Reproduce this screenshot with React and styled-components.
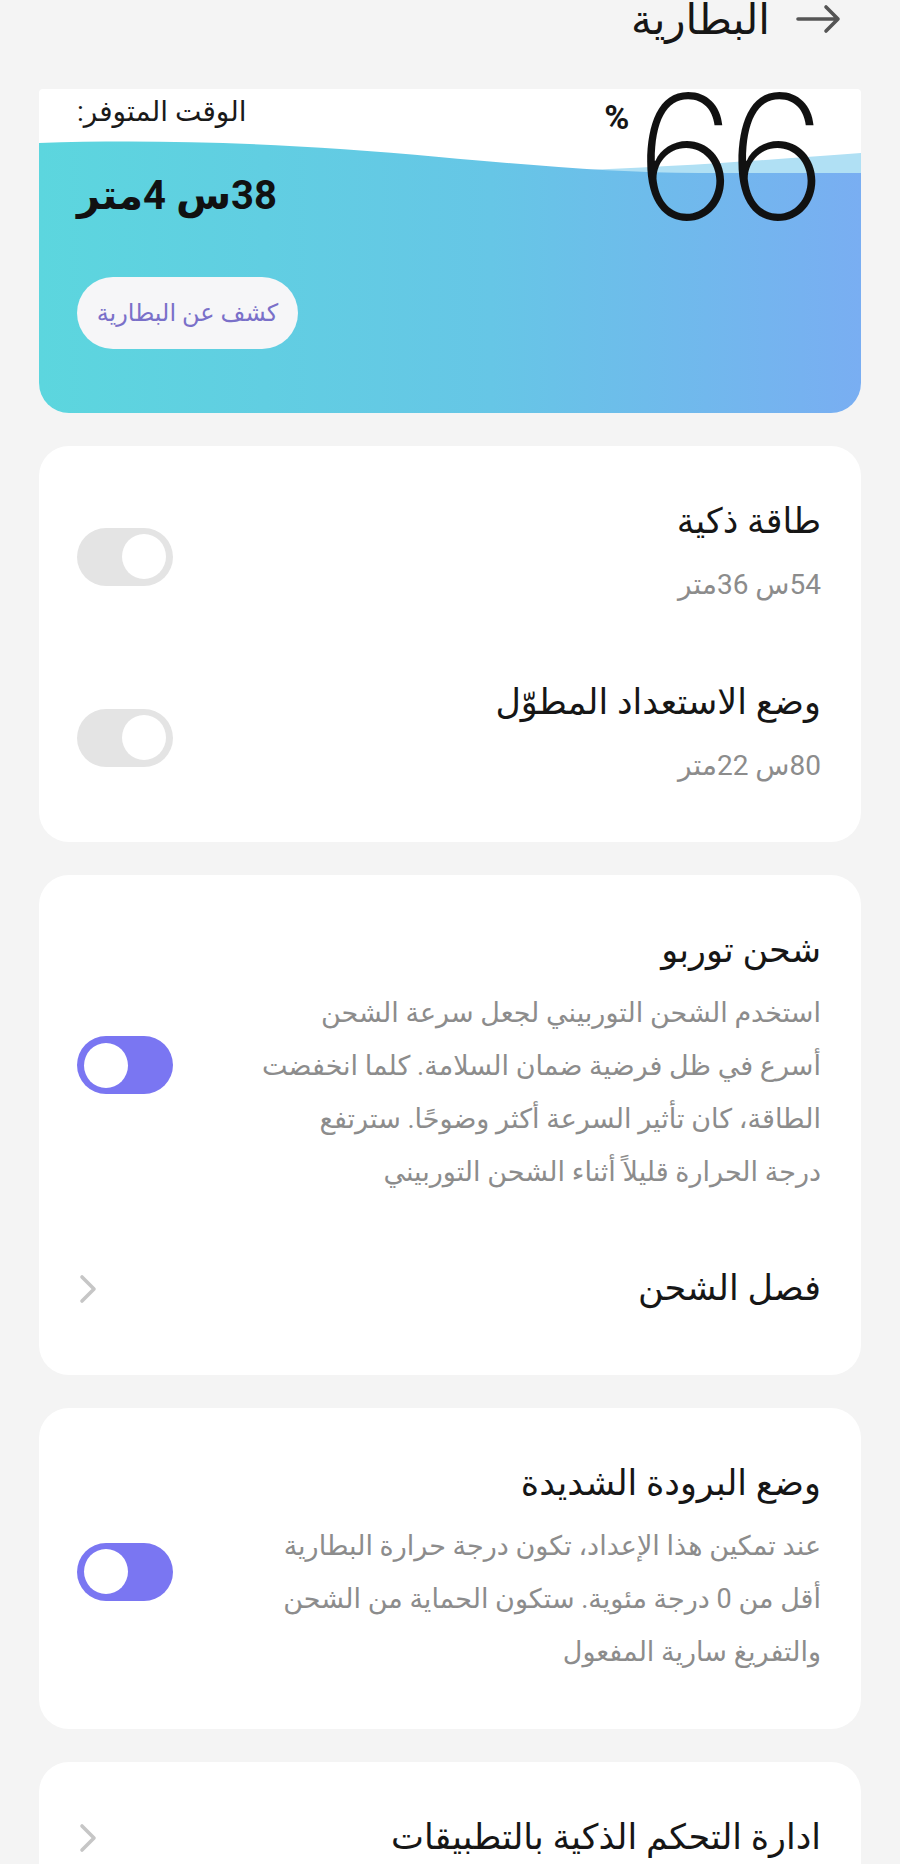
import React from "react";
import styled, { createGlobalStyle } from "styled-components";

const GlobalStyle = createGlobalStyle`
  html, body {
    margin: 0;
    padding: 0;
    background: #f4f4f4;
  }
  body {
    font-family: "Roboto", "DejaVu Sans", sans-serif;
    color: #161616;
  }
`;

const Page = styled.div`
  direction: rtl;
  padding: 0 39px 40px;
  display: flex;
  flex-direction: column;
  gap: 33px;
`;

const Header = styled.header`
  height: 56px;
  display: flex;
  align-items: flex-start;
  gap: 26px;
  padding-right: 19px;
`;

const BackArrow = styled.svg`
  width: 46px;
  height: 30px;
  margin-top: 4px;
  flex-shrink: 0;
`;

const Title = styled.h1`
  margin: 0;
  font-size: 42px;
  font-weight: 500;
  line-height: 40px;
`;

const BatteryCard = styled.section`
  position: relative;
  overflow: hidden;
  height: 324px;
  border-radius: 4px 4px 30px 30px;
  background: #fff;
  display: flex;
  justify-content: space-between;
  padding: 0 43px 0 38px;
  box-sizing: border-box;
`;

const Wave = styled.svg`
  position: absolute;
  inset: 0;
  width: 100%;
  height: 100%;
`;

const Level = styled.div`
  position: relative;
  display: flex;
  align-items: flex-start;
  gap: 6px;
`;

const Digits = styled.span`
  font-family: "Inter", "Roboto", sans-serif;
  font-weight: 200;
  font-size: 172px;
  line-height: 1;
  letter-spacing: -9px;
  margin-top: -19px;
  color: #111;
`;

const Percent = styled.span`
  font-family: "Roboto", sans-serif;
  font-weight: 700;
  font-size: 34px;
  line-height: 1;
  margin-top: 11px;
`;

const Remaining = styled.div`
  position: relative;
  display: flex;
  flex-direction: column;
  align-items: flex-end;
  padding-top: 5px;
`;

const RemainLabel = styled.span`
  font-size: 28px;
  line-height: 36px;
  color: #1a1a1a;
`;

const RemainTime = styled.span`
  margin-top: 38px;
  font-size: 40px;
  font-weight: 700;
  line-height: 56px;
  color: #111;
`;

const DetectButton = styled.button`
  margin-top: 53px;
  width: 221px;
  height: 72px;
  border: none;
  border-radius: 36px;
  background: #f6f6f8;
  color: #7a70c9;
  font-family: "Roboto", "DejaVu Sans", sans-serif;
  font-size: 24px;
  direction: rtl;
`;

const Card = styled.section`
  background: #fff;
  border-radius: 30px;
  padding: 56px 40px ${(p) => p.$bottom || 50}px 38px;
  display: flex;
  flex-direction: column;
  gap: ${(p) => p.$gap || 72}px;
`;

const Row = styled.div`
  display: flex;
  align-items: center;
  justify-content: space-between;
`;

const TextBlock = styled.div`
  display: flex;
  flex-direction: column;
  gap: 16px;
`;

const ItemTitle = styled.div`
  font-size: 35px;
  line-height: 40px;
  color: #161616;
  white-space: nowrap;
`;

const Sub = styled.div`
  font-size: 28px;
  line-height: 53px;
  color: #8c8c8c;
  white-space: nowrap;
`;

const Desc = styled.div`
  font-size: 27px;
  line-height: 53px;
  color: #8c8c8c;
  div {
    white-space: nowrap;
  }
`;

const Toggle = styled.div`
  width: 96px;
  height: 58px;
  border-radius: 29px;
  background: ${(p) => (p.$on ? "#7a76f2" : "#e4e4e4")};
  display: flex;
  align-items: center;
  justify-content: ${(p) => (p.$on ? "flex-end" : "flex-start")};
  padding: 0 7px;
  box-sizing: border-box;
  flex-shrink: 0;
`;

const Knob = styled.div`
  width: 44px;
  height: 45px;
  border-radius: 50%;
  background: #fff;
`;

const Chevron = styled.svg`
  width: 18px;
  height: 30px;
  margin-left: 2px;
  flex-shrink: 0;
`;

const Arrow = () => (
  <BackArrow viewBox="0 0 46 30">
    <path
      d="M2 15 H42 M30 3 L42 15 L30 27"
      fill="none"
      stroke="#555"
      strokeWidth="3.6"
      strokeLinecap="round"
      strokeLinejoin="round"
    />
  </BackArrow>
);

const Next = () => (
  <Chevron viewBox="0 0 18 30">
    <path
      d="M3 3 L15 15 L3 27"
      fill="none"
      stroke="#c6c6c6"
      strokeWidth="3.6"
      strokeLinecap="round"
      strokeLinejoin="round"
    />
  </Chevron>
);

const Switch = ({ on }) => (
  <Toggle $on={on}>
    <Knob />
  </Toggle>
);

const SettingRow = ({ title, lines, on }) => (
  <Row>
    <TextBlock>
      <ItemTitle>{title}</ItemTitle>
      <Desc>
        {lines.map((l) => (
          <div key={l}>{l}</div>
        ))}
      </Desc>
    </TextBlock>
    <Switch on={on} />
  </Row>
);

const NavRow = ({ title }) => (
  <Row>
    <ItemTitle>{title}</ItemTitle>
    <Next />
  </Row>
);

export default function App() {
  return (
    <>
      <GlobalStyle />
      <Page>
        <Header>
          <Arrow />
          <Title>البطارية</Title>
        </Header>

        <BatteryCard>
          <Wave viewBox="0 0 822 324" preserveAspectRatio="none">
            <defs>
              <linearGradient id="water" x1="0" y1="0" x2="1" y2="0">
                <stop offset="0" stopColor="#5cd6de" />
                <stop offset="0.55" stopColor="#66c6e6" />
                <stop offset="1" stopColor="#79aef2" />
              </linearGradient>
            </defs>
            <path d="M520 82 C640 78 740 70 822 64 L822 120 L520 120 Z" fill="#b0e0f4" />
            <path
              d="M0 54 C120 50 250 54 400 68 C500 77 580 84 660 84 L822 84 L822 324 L0 324 Z"
              fill="url(#water)"
            />
          </Wave>
          <Level>
            <Digits>66</Digits>
            <Percent>%</Percent>
          </Level>
          <Remaining>
            <RemainLabel>الوقت المتوفر:</RemainLabel>
            <RemainTime>38س 4متر</RemainTime>
            <DetectButton>كشف عن البطارية</DetectButton>
          </Remaining>
        </BatteryCard>

        <Card>
          <Row>
            <TextBlock>
              <ItemTitle>طاقة ذكية</ItemTitle>
              <Sub>54س 36متر</Sub>
            </TextBlock>
            <Switch />
          </Row>
          <Row>
            <TextBlock>
              <ItemTitle>وضع الاستعداد المطوّل</ItemTitle>
              <Sub>80س 22متر</Sub>
            </TextBlock>
            <Switch />
          </Row>
        </Card>

        <Card $gap={70} $bottom={66}>
          <SettingRow
            on
            title="شحن توربو"
            lines={[
              "استخدم الشحن التوربيني لجعل سرعة الشحن",
              "أسرع في ظل فرضية ضمان السلامة. كلما انخفضت",
              "الطاقة، كان تأثير السرعة أكثر وضوحًا. سترتفع",
              "درجة الحرارة قليلاً أثناء الشحن التوربيني",
            ]}
          />
          <NavRow title="فصل الشحن" />
        </Card>

        <Card>
          <SettingRow
            on
            title="وضع البرودة الشديدة"
            lines={[
              "عند تمكين هذا الإعداد، تكون درجة حرارة البطارية",
              "أقل من 0 درجة مئوية. ستكون الحماية من الشحن",
              "والتفريغ سارية المفعول",
            ]}
          />
        </Card>

        <Card>
          <NavRow title="ادارة التحكم الذكية بالتطبيقات" />
        </Card>
      </Page>
    </>
  );
}
